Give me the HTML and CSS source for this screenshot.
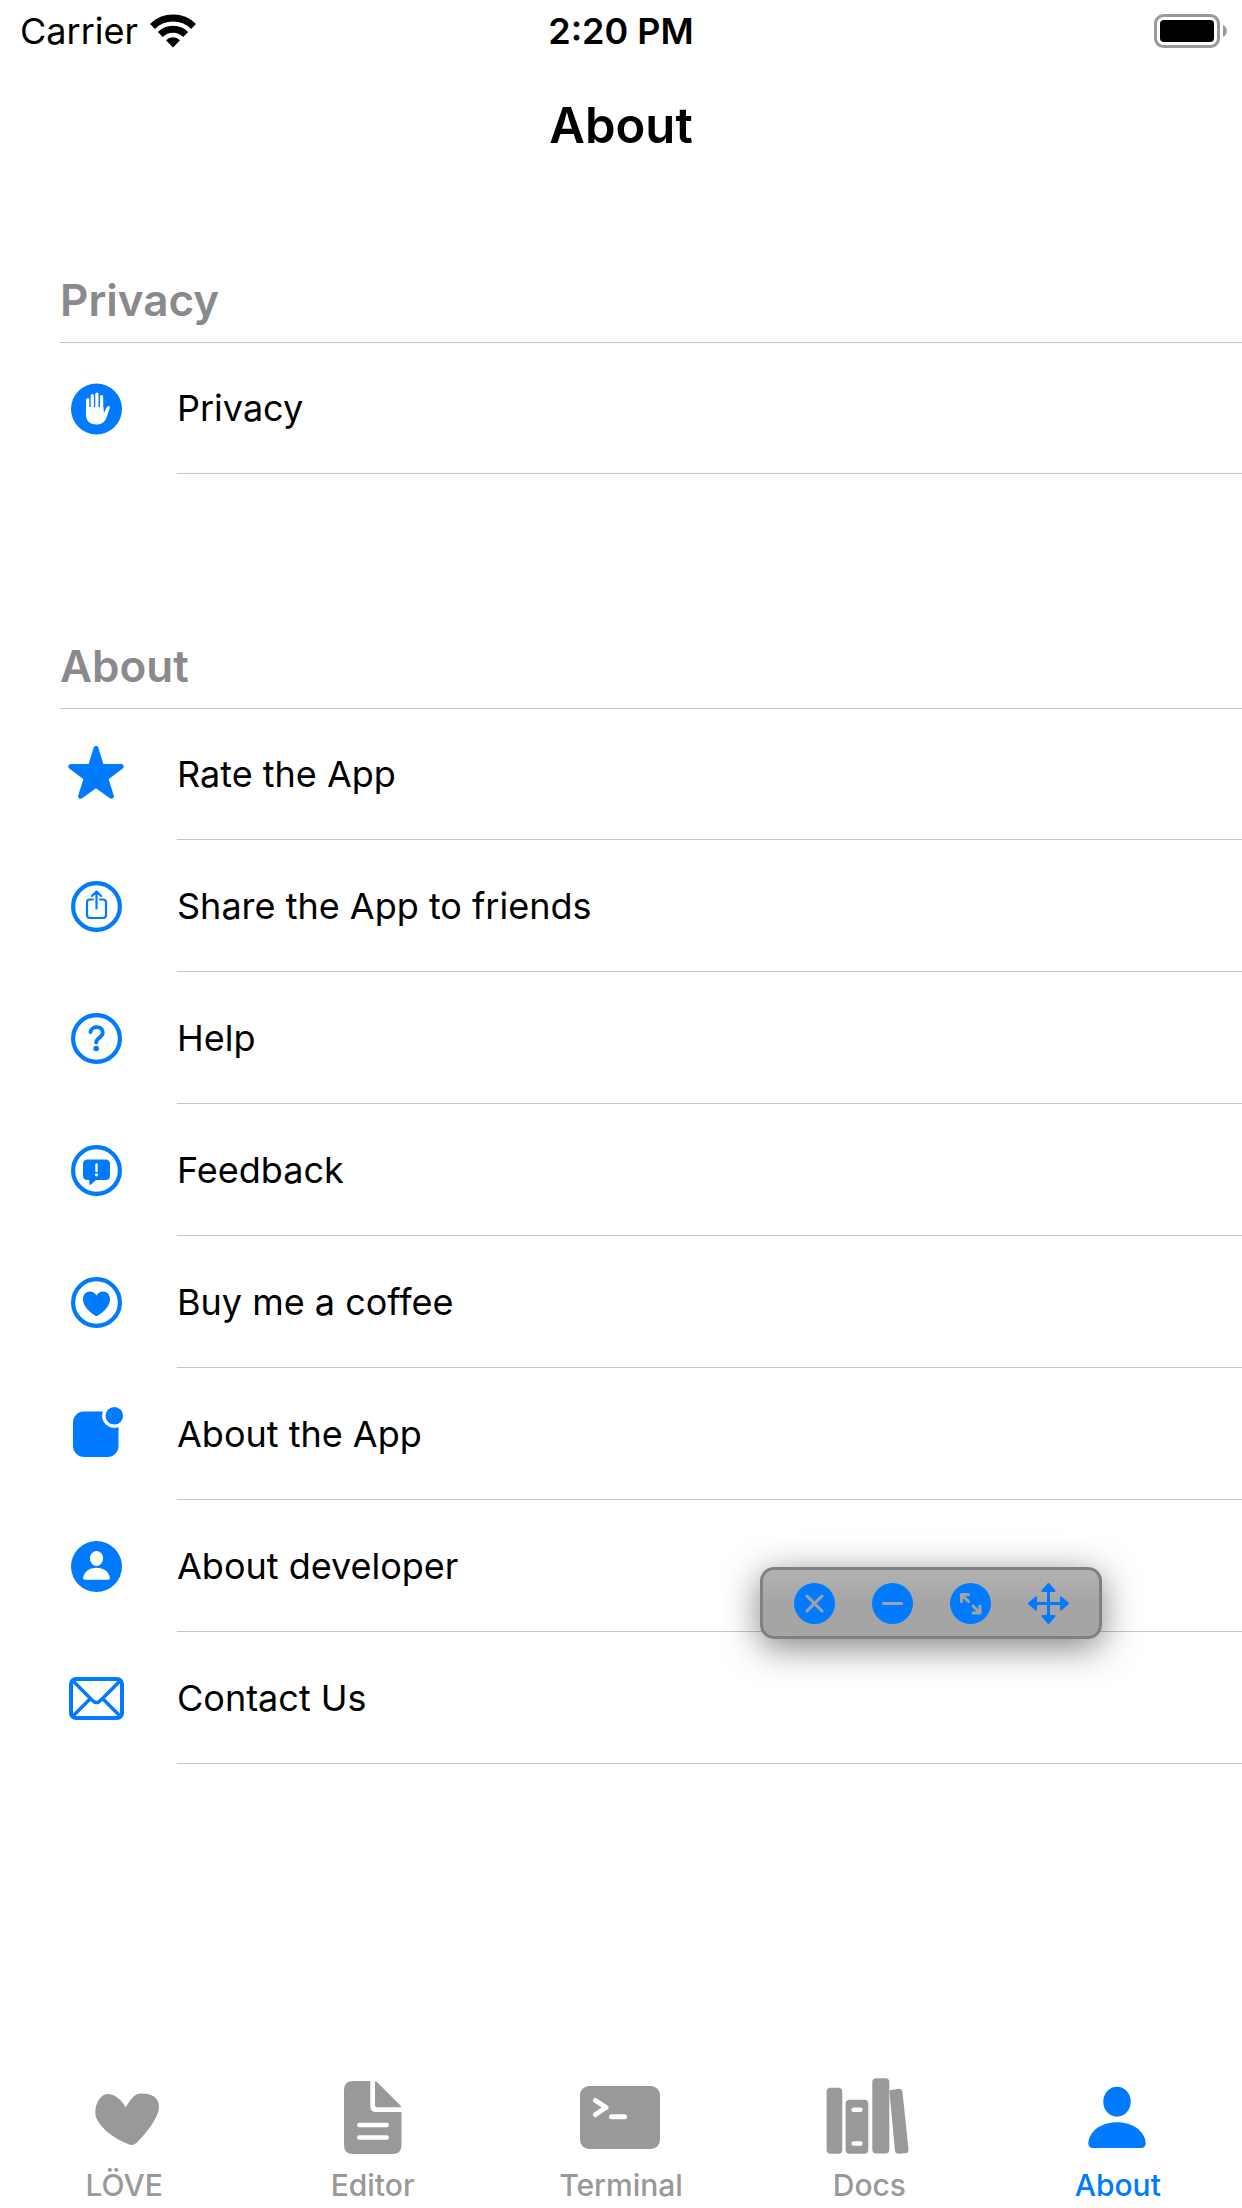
FILE: index.html
```html
<!DOCTYPE html>
<html lang="en">
<head>
  <meta charset="UTF-8" />
  <meta name="viewport" content="width=device-width, initial-scale=1.0"/>
  <title>About</title>
  <link rel="stylesheet" href="styles.css">
</head>
<body>
  <div class="status-bar">
    <div class="carrier">
      <span>Carrier</span>
      <svg width="46" height="34" viewBox="0 0 46 34">
        <g fill="none" stroke="#000">
          <path stroke-width="7" d="M2.5 12.5A29.2 29.2 0 0 1 43.5 12.5"/>
          <path stroke-width="7" d="M10.3 20.5A18 18 0 0 1 35.7 20.5"/>
        </g>
        <path d="M23 33.5L16 26.2A10 10 0 0 1 30 26.2Z"/>
      </svg>
    </div>
    <span class="time">2:20 PM</span>
    <svg class="battery" width="74" height="34" viewBox="0 0 74 34">
      <rect x="1.5" y="1.5" width="63" height="31" rx="8" fill="none" stroke="#999" stroke-width="3"/>
      <rect x="6" y="6" width="54" height="22" rx="4"/>
      <path fill="#999" d="M69 11c5 2 5 10 0 12z"/>
    </svg>
  </div>

  <header class="nav-bar">
    <h1>About</h1>
  </header>

  <main>
    <section>
      <h2>Privacy</h2>
      <ul class="list">
        <li><a href="#privacy">
          <svg class="icon" viewBox="0 0 72 72">
            <circle cx="36.5" cy="36" r="25.5"/>
            <path class="white" d="M26 34H43.300L44 40L46.700 34.300C47.800 32 50.500 32.900 49.800 35L46.500 44.500C44.800 49.300 41.500 51.500 36.500 51.500C29.500 51.500 26 47.500 26 42Z"/>
            <path class="white-line" stroke-width="3.200" d="M27.700 37.500V26.500M32.300 37.500V22.500M36.900 37.500V21M41.600 37.500V23.500"/>
          </svg>
          <span>Privacy</span>
        </a></li>
      </ul>
    </section>

    <section>
      <h2>About</h2>
      <ul class="list">
        <li><a href="#rate">
          <svg class="icon" viewBox="0 0 72 72">
            <path stroke="#007aff" stroke-width="5" stroke-linejoin="round" d="M36 9.500L41.500 27.500H61.200L45.700 39.200L51.400 57.200L36 46.200L20.600 57.200L26.300 39.200L10.800 27.500H30.500Z"/>
          </svg>
          <span>Rate the App</span>
        </a></li>
        <li><a href="#share">
          <svg class="icon" viewBox="0 0 72 72">
            <g class="line">
              <circle cx="36.5" cy="36.500" r="23.400" stroke-width="4.200"/>
              <path stroke-width="2.200" d="M33 29.500H30Q27 29.500 27 32.500V45Q27 48 30 48H43Q46 48 46 45V32.500Q46 29.500 43 29.500H40M36.500 38.500V22M32 26L36.500 21.500L41 26"/>
            </g>
          </svg>
          <span>Share the App to friends</span>
        </a></li>
        <li><a href="#help">
          <svg class="icon" viewBox="0 0 72 72">
            <g class="line">
              <circle cx="36.5" cy="36.500" r="23.400" stroke-width="4.200"/>
              <path stroke-width="3.800" d="M30.500 30C31.500 23.500 42.800 23.500 42.800 30.500C42.800 35.500 36.200 36 36.200 40.500"/>
            </g>
            <circle cx="36.200" cy="46.500" r="2.800"/>
          </svg>
          <span>Help</span>
        </a></li>
        <li><a href="#feedback">
          <svg class="icon" viewBox="0 0 72 72">
            <circle class="line" cx="36.5" cy="36.500" r="23.400" stroke-width="4.200"/>
            <path d="M27.500 25.500H45.500Q50 25.500 50 30V41.500Q50 46 45.500 46H36L31 50.500Q29.300 51.800 29.300 49.500V46H27.500Q23 46 23 41.500V30Q23 25.500 27.500 25.500Z"/>
            <path class="white-line" stroke-width="2.400" d="M36.500 30.500V37"/>
            <circle class="white" cx="36.500" cy="40.800" r="1.600"/>
          </svg>
          <span>Feedback</span>
        </a></li>
        <li><a href="#coffee">
          <svg class="icon" viewBox="0 0 72 72">
            <circle class="line" cx="36.5" cy="36.500" r="23.400" stroke-width="4.200"/>
            <path d="M36.500 29.500C38 26.700 40.500 25.500 43 25.500C47 25.500 50 28.500 50 33C50 39.500 45 45 38 49.500Q36.500 50.500 35 49.500C28 45 23 39.500 23 33C23 28.500 26 25.500 30 25.500C32.500 25.500 35 26.700 36.500 29.500Z"/>
          </svg>
          <span>Buy me a coffee</span>
        </a></li>
        <li><a href="#app">
          <svg class="icon" viewBox="0 0 72 72">
            <rect x="13" y="13.500" width="45.500" height="45.500" rx="11"/>
            <circle class="white" cx="54.300" cy="17.700" r="12.200"/>
            <circle cx="54.300" cy="17.700" r="8.800"/>
          </svg>
          <span>About the App</span>
        </a></li>
        <li><a href="#developer">
          <svg class="icon" viewBox="0 0 72 72">
            <circle cx="36.5" cy="36.500" r="25.500"/>
            <ellipse class="white" cx="36.500" cy="28.500" rx="6.600" ry="7.400"/>
            <path class="white" d="M25 49.800Q23 49.800 23 48C24 41.500 29.500 37.700 36.500 37.700C43.500 37.700 49 41.500 50 48Q50 49.800 48 49.800Z"/>
          </svg>
          <span>About developer</span>
        </a></li>
        <li><a href="#contact">
          <svg class="icon" viewBox="0 0 72 72">
            <g class="line">
              <rect x="11" y="17" width="51" height="39" rx="5" stroke-width="4"/>
              <path stroke-width="3.400" d="M13 19L32 38Q36.500 43 41 38L60 19M13 54L30 37M60 54L43 37"/>
            </g>
          </svg>
          <span>Contact Us</span>
        </a></li>
      </ul>
    </section>
  </main>

  <div class="window-tools">
    <button type="button" aria-label="Close">
      <svg width="42" height="42" viewBox="0 0 42 42">
        <circle cx="21.500" cy="21.500" r="20.500"/>
        <path class="gray-line" d="M14 14L29 29M29 14L14 29"/>
      </svg>
    </button>
    <button type="button" aria-label="Minimize">
      <svg width="42" height="42" viewBox="0 0 42 42">
        <circle cx="21.500" cy="21.500" r="20.500"/>
        <path class="gray-line" d="M12.500 21.500H30.500"/>
      </svg>
    </button>
    <button type="button" aria-label="Resize">
      <svg width="42" height="42" viewBox="0 0 42 42">
        <circle cx="21.500" cy="21.500" r="20.500"/>
        <path class="gray-line" d="M19.500 19.500L12.500 12.500M12.500 19.500V12.500H19.500M24 24L31 31M31 24V31H24"/>
      </svg>
    </button>
    <button type="button" aria-label="Move">
      <svg width="42" height="42" viewBox="0 0 42 42">
        <path fill="none" stroke="#007aff" stroke-width="3" d="M21.500 6V37M6 21.500H37"/>
        <path stroke="#007aff" stroke-width="2" stroke-linejoin="round" d="M21.500 2L27.500 9H15.500ZM21.500 41L27.500 34H15.500ZM2 21.500L9 15.500V27.500ZM41 21.500L34 15.500V27.500Z"/>
      </svg>
    </button>
  </div>

  <nav class="tab-bar">
    <a href="#love">
      <svg viewBox="-3 0 90 80">
        <path d="M13.300 36C13 26 19 17 25.500 17C33 17 40 23 43.500 30.500C47 25 52 17 57 16.700C68 16 77 19 77 30.500C76 42 64 56 55 65.500Q51 69.500 46 67C28 60 13.500 46 13.300 36Z"/>
      </svg>
      <span>LÖVE</span>
    </a>
    <a href="#editor">
      <svg viewBox="-3 0 90 80">
        <path d="M22 4H39.300V29Q39.300 35 45 35H70.500V68Q70.500 77 61.500 77H22Q13 77 13 68V13Q13 4 22 4Z"/>
        <path d="M44 4.500Q45.500 4.500 47 6L69 28Q70.500 29.500 70 30.300H46Q44 30.300 44 28.500Z"/>
        <path class="white-line" stroke-width="4.500" d="M28.300 48H55.700M28.300 60.600H55.700"/>
      </svg>
      <span>Editor</span>
    </a>
    <a href="#terminal">
      <svg viewBox="-3 0 90 80">
        <rect x="1" y="9" width="80" height="63" rx="9"/>
        <path class="white-line" stroke-width="5" d="M16.500 23.500L27 30.500L16.500 37.500M32.500 39.700H45.500"/>
      </svg>
      <span>Terminal</span>
    </a>
    <a href="#docs">
      <svg viewBox="-3 0 90 80">
        <rect x="-0.400" y="10.700" width="15.700" height="66" rx="4"/>
        <rect x="18.600" y="22.700" width="22.700" height="54" rx="4"/>
        <rect x="45.300" y="1.300" width="17" height="75.300" rx="4"/>
        <path d="M62.300 13.500L71.500 11.700Q75 11.300 75.500 15L81.500 72.500Q81.700 76 78.500 76.300L72 76.800Q68.500 76.800 68 73.500Z"/>
        <path class="white-line" stroke-width="4.500" d="M26.600 32.700H33.400M26.600 66.500H33.400"/>
      </svg>
      <span>Docs</span>
    </a>
    <a href="#about" class="active">
      <svg viewBox="-3 0 90 80">
        <ellipse cx="41" cy="24.700" rx="13.700" ry="15"/>
        <path d="M17 71Q12.300 71 12.300 66C13.500 54 25 45.300 41 45.300C57 45.300 68.500 54 69.700 66Q69.700 71 65 71Z"/>
      </svg>
      <span>About</span>
    </a>
  </nav>
</body>
</html>
```

FILE: styles.css
```css
* {
  box-sizing: border-box;
}
body {
  position: relative;
  display: flex;
  flex-direction: column;
  min-height: 100vh;
  margin: 0;
  background: #fff;
  color: #000;
  font-family: Inter, "Liberation Sans", sans-serif;
  font-size: 36px;
}
a {
  color: inherit;
  text-decoration: none;
}
h1, h2, ul {
  margin: 0;
  padding: 0;
}
svg {
  display: block;
}

/* status bar */
.status-bar {
  display: grid;
  grid-template-columns: 1fr auto 1fr;
  align-items: center;
  height: 60px;
  padding: 0 14px;
  line-height: 62px;
}
.carrier {
  display: flex;
  align-items: center;
  gap: 12px;
  padding-left: 6px;
}
.time {
  font-weight: 600;
}
.battery {
  justify-self: end;
}

.nav-bar {
  height: 132px;
}
h1 {
  font-size: 49px;
  font-weight: 600;
  line-height: 132px;
  text-align: center;
}

/* lists */
main {
  padding: 80px 0 0 60px;
}
section {
  margin-bottom: 164px;
}
h2 {
  padding-bottom: 14px;
  color: #8a8a8e;
  font-size: 44px;
  font-weight: 600;
  line-height: 56px;
}
.list {
  list-style: none;
}
.list li {
  height: 132px;
}
.list li:first-child {
  border-top: 1px solid #c6c6c8;
}
.list a {
  display: grid;
  grid-template-columns: 72px 1fr;
  gap: 45px;
  align-items: center;
  height: 100%;
}
.list span {
  display: flex;
  align-items: center;
  height: 100%;
  border-bottom: 1px solid #c6c6c8;
}
.icon {
  width: 72px;
  height: 72px;
  fill: #007aff;
}
.line {
  fill: none;
  stroke: #007aff;
  stroke-linecap: round;
  stroke-linejoin: round;
}
.white {
  fill: #fff;
}
.white-line {
  fill: none;
  stroke: #fff;
  stroke-linecap: round;
  stroke-linejoin: round;
}

/* floating window controls */
.window-tools {
  position: absolute;
  top: 1567px;
  right: 140px;
  display: flex;
  height: 72px;
  padding: 0 12px;
  border: 3px solid #808080;
  border-radius: 14px;
  background: linear-gradient(rgba(174, 174, 174, 0.95), rgba(160, 160, 160, 0.95) 50%);
  box-shadow: 0 8px 36px rgba(0, 0, 0, 0.5);
}
.window-tools button {
  display: flex;
  align-items: center;
  justify-content: center;
  width: 78px;
  padding: 0;
  border: none;
  background: none;
  cursor: pointer;
}
.window-tools svg {
  fill: #007aff;
}
.window-tools .gray-line {
  fill: none;
  stroke: #a2a2a2;
  stroke-width: 3;
  stroke-linecap: round;
  stroke-linejoin: round;
}

/* tab bar */
.tab-bar {
  display: grid;
  grid-template-columns: repeat(5, 1fr);
  height: 131px;
  margin-top: auto;
  color: #999;
  font-size: 30px;
  font-weight: 500;
  line-height: 40px;
}
.tab-bar a {
  display: flex;
  flex-direction: column;
  align-items: center;
  gap: 8px;
}
.tab-bar svg {
  width: 90px;
  height: 80px;
  fill: currentColor;
}
.tab-bar .active {
  color: #007aff;
}
```
